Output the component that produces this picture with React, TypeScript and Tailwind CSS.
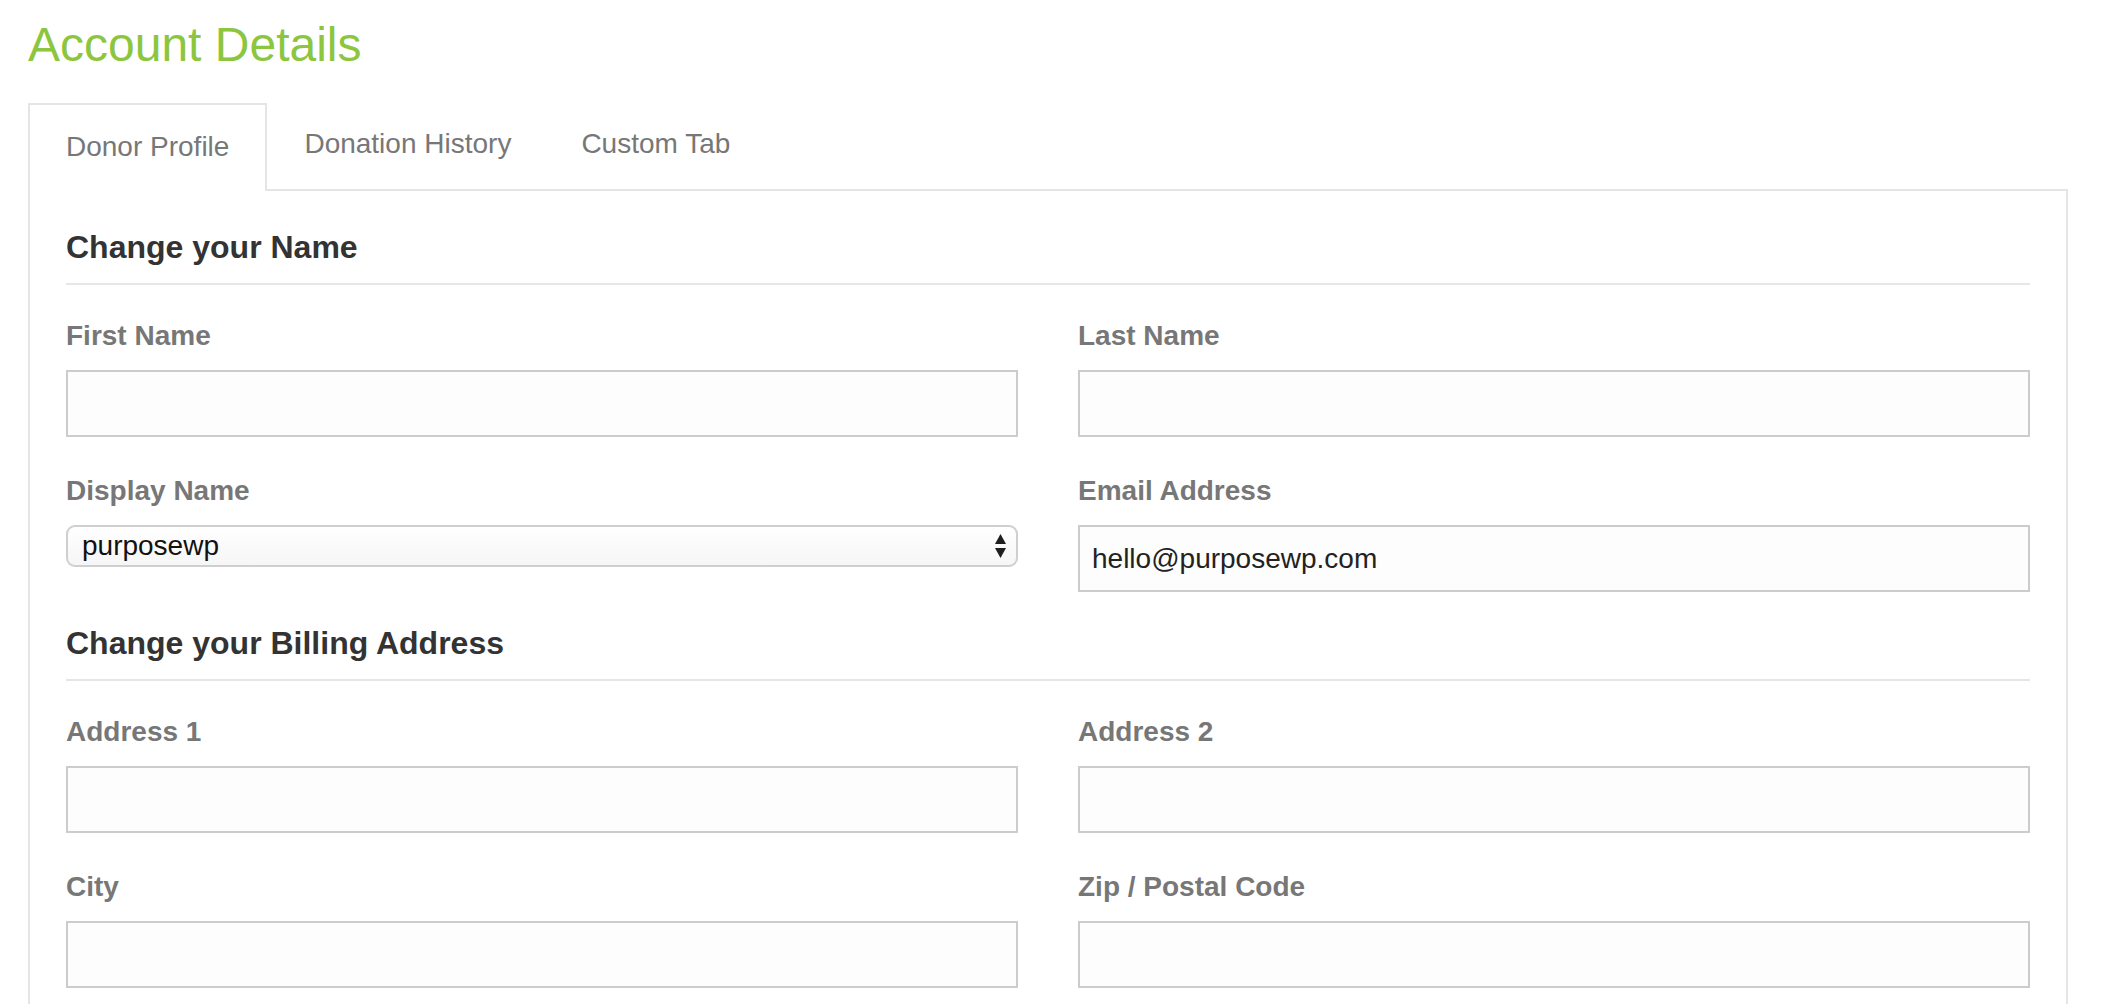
import React from "react";

function Field({ label, value }: { label: string; value?: string }) {
  return (
    <div className="flex flex-col">
      <label className="text-[28px] leading-[40px] font-bold text-[#777777] mb-[14px]">{label}</label>
      <input
        readOnly
        value={value ?? ""}
        className="h-[67px] w-full border-2 border-[#cccccc] bg-[#fdfdfd] px-[12px] text-[28px] text-[#222222] outline-none font-['Liberation_Sans',Arial,sans-serif]"
      />
    </div>
  );
}

function SelectField({ label, value }: { label: string; value: string }) {
  return (
    <div className="flex flex-col">
      <label className="text-[28px] leading-[40px] font-bold text-[#777777] mb-[14px]">{label}</label>
      <div className="relative h-[42px]">
        <select
          defaultValue={value}
          className="appearance-none h-[42px] w-full rounded-[9px] border-2 border-[#cfcfcf] bg-gradient-to-b from-[#ffffff] to-[#f6f6f6] pl-[14px] pr-[40px] text-[28px] leading-[38px] text-[#111111] outline-none font-['Liberation_Sans',Arial,sans-serif]"
        >
          <option value="purposewp">purposewp</option>
        </select>
        <svg
          className="pointer-events-none absolute right-[12px] top-[9px]"
          width="11"
          height="24"
          viewBox="0 0 11 24"
        >
          <polygon points="5.5,0 11,10 0,10" fill="#1f1f1f" />
          <polygon points="0,14 11,14 5.5,24" fill="#1f1f1f" />
        </svg>
      </div>
    </div>
  );
}

export default function App() {
  return (
    <div className="h-[1004px] w-full overflow-hidden bg-white pl-[28px] pr-[34px] pt-[21px] font-['Liberation_Sans',Arial,sans-serif]">
      <h1 className="text-[48px] leading-[48px] font-normal text-[#8cc63e]">Account Details</h1>

      <div className="mt-[34px] flex items-start">
        <div className="relative z-10 mb-[-2px] border-x-2 border-t-2 border-[#e5e5e5] bg-white px-[36px] pt-[22px] pb-[24px] text-[28px] leading-[40px] text-[#777777]">
          Donor Profile
        </div>
        <div className="pl-[37px] pr-[35px] pt-[21px] text-[28px] leading-[40px] text-[#777777]">Donation History</div>
        <div className="px-[35px] pt-[21px] text-[28px] leading-[40px] text-[#777777]">Custom Tab</div>
      </div>

      <div className="border-2 border-[#e5e5e5] px-[36px] pt-[36px] pb-[60px]">
        <h2 className="border-b-2 border-[#e6e6e6] pb-[16px] text-[32px] leading-[40px] font-bold text-[#333333]">
          Change your Name
        </h2>
        <div className="mt-[31px] grid grid-cols-2 gap-x-[60px] gap-y-[34px]">
          <Field label="First Name" />
          <Field label="Last Name" />
          <SelectField label="Display Name" value="purposewp" />
          <Field label="Email Address" value="hello@purposewp.com" />
        </div>

        <h2 className="mt-[31px] border-b-2 border-[#e6e6e6] pb-[16px] text-[32px] leading-[40px] font-bold text-[#333333]">
          Change your Billing Address
        </h2>
        <div className="mt-[31px] grid grid-cols-2 gap-x-[60px] gap-y-[34px]">
          <Field label="Address 1" />
          <Field label="Address 2" />
          <Field label="City" />
          <Field label="Zip / Postal Code" />
        </div>
      </div>
    </div>
  );
}
